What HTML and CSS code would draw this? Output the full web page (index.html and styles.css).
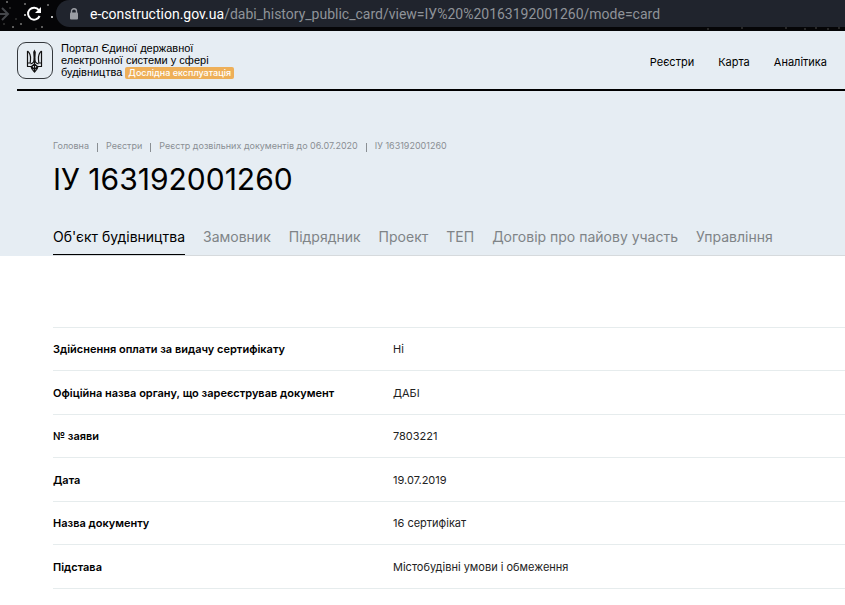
FILE: index.html
```html
<!DOCTYPE html>
<html lang="uk">
<head>
<meta charset="utf-8">
<title>ІУ 163192001260</title>
<link rel="stylesheet" href="styles.css">
</head>
<body>
<div class="browser">
  <svg class="stars" width="100%" height="31" aria-hidden="true">
    <g fill="#777">
      <circle cx="7" cy="2" r="1"/><circle cx="25" cy="4" r="1"/><circle cx="13" cy="27" r="1"/><circle cx="21" cy="24" r="1"/><circle cx="42" cy="27" r="1"/><circle cx="52" cy="17" r="1" fill="#fff"/><circle cx="25" cy="15" r="1" fill="#ddd"/><circle cx="48" cy="5" r="1"/>
    </g>
    <g fill="#333">
      <circle cx="10" cy="8" r="1"/><circle cx="16" cy="19" r="1"/><circle cx="4" cy="24" r="1"/><circle cx="36" cy="29" r="1"/><circle cx="708" cy="29" r="1"/><circle cx="742" cy="28" r="1"/><circle cx="786" cy="28" r="1"/><circle cx="805" cy="29" r="1"/><circle cx="816" cy="28" r="1"/><circle cx="828" cy="29" r="1"/><circle cx="839" cy="28" r="1"/>
    </g>
  </svg>
  <svg class="forward" width="10" height="16" viewBox="0 0 10 16" aria-hidden="true"><path d="M0 8h8M2 2l6 6-6 6" fill="none" stroke="#44464a" stroke-width="2"/></svg>
  <button class="reload" type="button" aria-label="Оновити">
    <svg width="16" height="16" viewBox="0 0 16 16" aria-hidden="true"><path d="M12.800 4A6 6 0 1 0 13.600 10" fill="none" stroke="#fff" stroke-width="2"/><path d="M15 1v6H9z" fill="#fff"/></svg>
  </button>
  <div class="address">
    <svg width="10" height="12" viewBox="0 0 10 12" aria-hidden="true"><path d="M2.500 5V3.200a2.500 2.500 0 0 1 5 0V5" fill="none" stroke="#9a9da3" stroke-width="1.400"/><rect x="1" y="4.500" width="8" height="7" rx="1" fill="#9a9da3"/></svg>
    <span class="url"><b>e-construction.gov.ua</b>/dabi_history_public_card/view=ІУ%20%20163192001260/mode=card</span>
  </div>
</div>
<div class="top">
  <header class="header">
    <a class="brand" href="#">
      <svg class="emblem" width="36" height="37" viewBox="0 0 36 37" aria-hidden="true">
        <rect x=".5" y=".5" width="35" height="36" rx="8.500" fill="none" stroke="#34383c"/>
        <g fill="none" stroke="#111" stroke-width="1.200" stroke-linejoin="round">
          <path d="M10.500 9v15.500h5M24.500 9v15.500h-5"/>
          <path d="M10.500 9c2.500 2 3.300 4.500 3 8.500l-.3 3.500h-2.700M24.500 9c-2.500 2-3.300 4.500-3 8.500l.3 3.500h2.700"/>
          <path d="M17.500 16c0 4-1.300 5.500-4 5.800M17.500 16c0 4 1.300 5.500 4 5.800"/>
          <path d="M14 24.500c.3 2.500 1.500 3.500 3.500 5.500 2-2 3.200-3 3.500-5.500M17.500 19v10.500M14.500 24.500l3-2.500 3 2.500-3 3z"/>
        </g>
        <path d="M17.500 7.500l1.300 2.500-.5 9h-1.600l-.5-9z" fill="#111"/>
      </svg>
      <span class="brand-text">Портал Єдиної державної<br>електронної системи у сфері<br>будівництва <span class="badge">Дослідна експлуатація</span></span>
    </a>
    <nav class="menu">
      <a href="#">Реєстри</a>
      <a href="#">Карта</a>
      <a href="#">Аналітика</a>
    </nav>
  </header>
  <div class="intro">
    <nav class="crumbs">
      <a href="#">Головна</a>
      <a href="#">Реєстри</a>
      <a href="#">Реєстр дозвільних документів до 06.07.2020</a>
      <span>ІУ 163192001260</span>
    </nav>
    <h1>ІУ 163192001260</h1>
    <div class="tabs">
      <button class="active" type="button">Об'єкт будівництва</button>
      <button type="button">Замовник</button>
      <button type="button">Підрядник</button>
      <button type="button">Проект</button>
      <button type="button">ТЕП</button>
      <button type="button">Договір про пайову участь</button>
      <button type="button">Управління</button>
    </div>
  </div>
</div>
<main>
  <table>
    <tr><th scope="row">Здійснення оплати за видачу сертифікату</th><td>Ні</td></tr>
    <tr><th scope="row">Офіційна назва органу, що зареєстрував документ</th><td>ДАБІ</td></tr>
    <tr><th scope="row">№ заяви</th><td>7803221</td></tr>
    <tr><th scope="row">Дата</th><td>19.07.2019</td></tr>
    <tr><th scope="row">Назва документу</th><td>16 сертифікат</td></tr>
    <tr><th scope="row">Підстава</th><td>Містобудівні умови і обмеження</td></tr>
  </table>
</main>
</body>
</html>
```
FILE: styles.css
```css
* { box-sizing: border-box; }
body {
  margin: 0;
  background: #fff;
  color: #000;
  font-family: Inter, "Liberation Sans", sans-serif;
  font-size: 11px;
}
a { color: inherit; text-decoration: none; }
button {
  border: 0;
  padding: 0;
  background: none;
  color: inherit;
  font: inherit;
}
.browser {
  position: relative;
  display: flex;
  align-items: center;
  padding-bottom: 4px;
  background: #050507;
  overflow: hidden;
}
.stars { position: absolute; top: 0; left: 0; }
.forward, .reload, .address { position: relative; }
.reload { display: flex; margin: 0 14px 0 16px; }
.address {
  display: flex;
  flex: 1;
  align-items: center;
  gap: 11px;
  height: 27px;
  padding-left: 13px;
  border-radius: 14px 0 0 14px;
  background: #20242d;
}
.url {
  color: #8f9399;
  font: 14px/20px Roboto, sans-serif;
  white-space: nowrap;
}
.url b { color: #fff; font-weight: 400; }

.top { background: #e6edf3; }
.header {
  display: flex;
  align-items: center;
  justify-content: space-between;
  height: 60px;
  margin-left: 17px;
  padding-right: 18px;
  border-bottom: 2px solid #000;
}
.brand { display: flex; align-items: center; gap: 8px; }
.brand-text {
  font: 11px/12px "Liberation Sans", sans-serif;
  white-space: nowrap;
}
.badge {
  display: inline-block;
  padding: 0 3px;
  border-radius: 2px;
  background: #eeaf58;
  color: #fff;
  font-family: Inter, sans-serif;
  font-size: 9px;
  font-weight: 500;
}
.menu { display: flex; gap: 24px; padding-top: 4px; }
.intro { padding: 48px 0 0 53px; }
.crumbs {
  display: flex;
  color: #8a8f93;
  font-size: 9px;
  line-height: 14px;
}
.crumbs > * + *::before {
  content: "";
  display: inline-block;
  width: 1px;
  height: 9px;
  margin: 0 8px;
  background: #8a8f93;
  vertical-align: -3px;
}
h1 {
  margin: 6px 0 0;
  font-size: 30px;
  font-weight: 400;
  line-height: 40px;
}
.tabs {
  display: flex;
  gap: 18px;
  margin-top: 28px;
  border-bottom: 1px solid #d6dadd;
}
.tabs button {
  height: 28px;
  padding-bottom: 8px;
  border-bottom: 1px solid transparent;
  color: #7f8487;
  font-size: 14px;
  line-height: 18px;
  white-space: nowrap;
}
.tabs .active { border-color: #000; color: #000; }
main { padding: 71px 0 16px 53px; }
table {
  width: 100%;
  border-collapse: collapse;
  border-top: 1px solid #e6eced;
}
tr { height: 43px; border-bottom: 1px solid #e6eced; }
tr:nth-child(even) { height: 44px; }
th, td { padding: 0; text-align: left; font-weight: 400; }
th { width: 340px; font-weight: 600; }
td { color: #222; }
```
